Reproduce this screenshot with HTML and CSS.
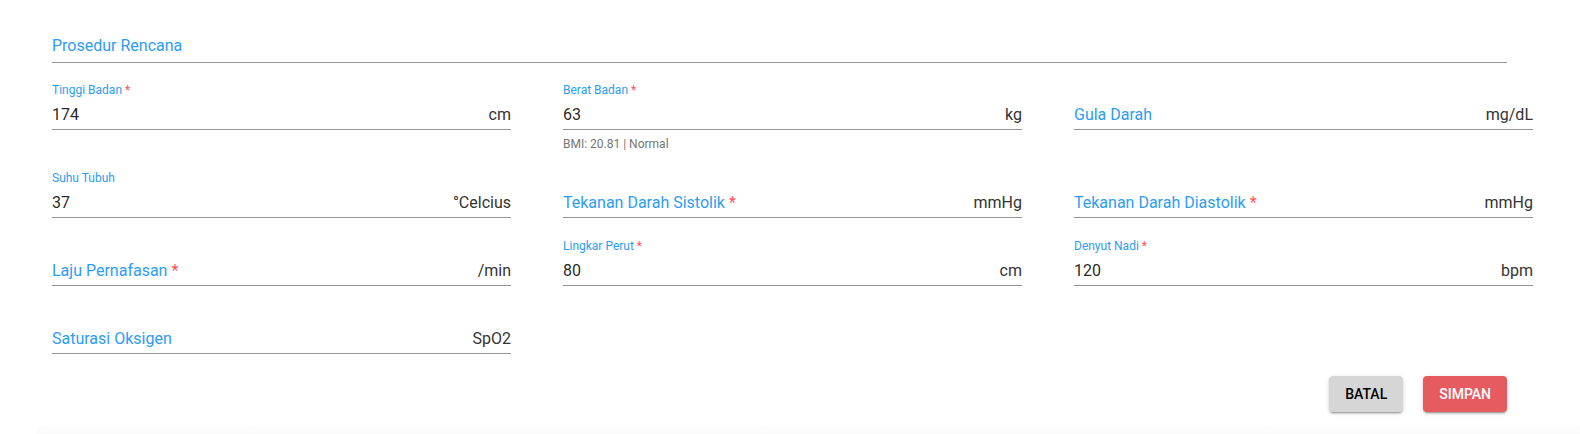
FILE: index.html
```html
<!DOCTYPE html>
<html lang="id">
<head>
<meta charset="utf-8">
<title>Form Vital</title>
<link rel="stylesheet" href="styles.css">
</head>
<body>
<div class="form">
  <div class="field field--wide">
    <div class="slot slot--wide"><span class="plabel">Prosedur Rencana</span></div>
  </div>

  <div class="grid">
    <div class="field">
      <div class="flabel">Tinggi Badan <span class="req">*</span></div>
      <div class="slot"><span class="value">174</span><span class="suffix">cm</span></div>
      <div class="details"></div>
    </div>
    <div class="field">
      <div class="flabel">Berat Badan <span class="req">*</span></div>
      <div class="slot"><span class="value">63</span><span class="suffix">kg</span></div>
      <div class="details details--hint">BMI: 20.81 | Normal</div>
    </div>
    <div class="field">
      <div class="flabel"></div>
      <div class="slot"><span class="plabel">Gula Darah</span><span class="suffix">mg/dL</span></div>
      <div class="details"></div>
    </div>

    <div class="field">
      <div class="flabel">Suhu Tubuh</div>
      <div class="slot"><span class="value">37</span><span class="suffix">°Celcius</span></div>
      <div class="details"></div>
    </div>
    <div class="field">
      <div class="flabel"></div>
      <div class="slot"><span class="plabel">Tekanan Darah Sistolik <span class="req">*</span></span><span class="suffix">mmHg</span></div>
      <div class="details"></div>
    </div>
    <div class="field">
      <div class="flabel"></div>
      <div class="slot"><span class="plabel">Tekanan Darah Diastolik <span class="req">*</span></span><span class="suffix">mmHg</span></div>
      <div class="details"></div>
    </div>

    <div class="field">
      <div class="flabel"></div>
      <div class="slot"><span class="plabel">Laju Pernafasan <span class="req">*</span></span><span class="suffix">/min</span></div>
      <div class="details"></div>
    </div>
    <div class="field">
      <div class="flabel">Lingkar Perut <span class="req">*</span></div>
      <div class="slot"><span class="value">80</span><span class="suffix">cm</span></div>
      <div class="details"></div>
    </div>
    <div class="field">
      <div class="flabel">Denyut Nadi <span class="req">*</span></div>
      <div class="slot"><span class="value">120</span><span class="suffix">bpm</span></div>
      <div class="details"></div>
    </div>

    <div class="field">
      <div class="flabel"></div>
      <div class="slot"><span class="plabel">Saturasi Oksigen</span><span class="suffix">SpO2</span></div>
      <div class="details"></div>
    </div>
  </div>

  <div class="actions">
    <button class="btn btn--cancel">BATAL</button>
    <button class="btn btn--save">SIMPAN</button>
  </div>
</div>
<div class="footer-shade"></div>
</body>
</html>
```

FILE: styles.css
```css
html, body {
  margin: 0;
  padding: 0;
  background: #ffffff;
}

body {
  font-family: Roboto, "Liberation Sans", Arial, sans-serif;
  color: rgba(0, 0, 0, 0.87);
  overflow: hidden;
  height: 434px;
}

.form {
  padding: 31px 0 0 52px;
}

.field {
  display: flex;
  flex-direction: column;
}

.field--wide {
  width: 1455px;
  margin-bottom: 19px;
}

.grid {
  width: 1481px;
  display: grid;
  grid-template-columns: repeat(3, 1fr);
  column-gap: 52px;
  align-items: start;
}

.flabel {
  height: 16px;
  font-size: 12px;
  line-height: 16px;
  color: #2d9cf4;
  white-space: nowrap;
}

.req {
  color: #ff5252;
}

.slot {
  box-sizing: border-box;
  height: 32px;
  border-bottom: 1px solid #949494;
  display: flex;
  align-items: flex-end;
  justify-content: space-between;
  padding-bottom: 4px;
  font-size: 16px;
  line-height: 20px;
}

.slot--wide {
  padding-bottom: 6px;
}

.plabel {
  color: #2d9cf4;
  white-space: nowrap;
}

.value {
  color: rgba(0, 0, 0, 0.87);
}

.suffix {
  color: #333333;
  white-space: nowrap;
}

.details {
  height: 20px;
}

.details--hint {
  box-sizing: border-box;
  height: 40px;
  padding-top: 7px;
  font-size: 12px;
  line-height: 14px;
  color: #757575;
}

.actions {
  width: 1455px;
  margin-top: 2px;
  display: flex;
  justify-content: flex-end;
  gap: 20px;
}

.btn {
  height: 36px;
  padding: 0 16px;
  border: none;
  border-radius: 4px;
  font-family: Roboto, "Liberation Sans", Arial, sans-serif;
  font-size: 14px;
  font-weight: 500;
  letter-spacing: 0;
  box-shadow: 0 3px 1px -2px rgba(0, 0, 0, 0.2), 0 2px 2px 0 rgba(0, 0, 0, 0.14), 0 1px 5px 0 rgba(0, 0, 0, 0.12);
  cursor: pointer;
}

.btn--cancel {
  background: #d6d6d6;
  color: #000000;
}

.btn--save {
  background: #e55b5f;
  color: #ffffff;
}

.footer-shade {
  margin: 13px 0 0 36px;
  height: 9px;
  background: linear-gradient(to bottom, #fdfdfd, #fafafa);
  border-top-left-radius: 10px;
}
```
